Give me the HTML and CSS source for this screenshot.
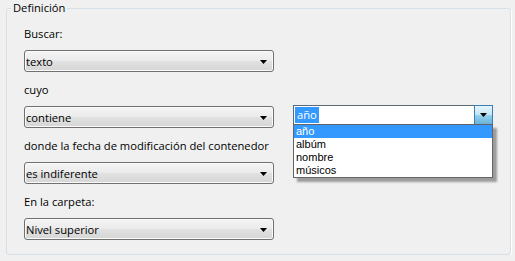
FILE: index.html
```html
<!DOCTYPE html>
<html lang="es">
<head>
    <meta charset="UTF-8">
    <title>Definición</title>
    <link rel="stylesheet" href="styles.css">
</head>
<body>
    <fieldset class="group">
        <legend>Definición</legend>

        <div class="field">
            <label>Buscar:</label>
            <div class="select">
                <span>texto</span>
                <svg class="arrow" width="7" height="4" viewBox="0 0 7 4"><path d="M0 0h7L3.5 4z"/></svg>
            </div>
        </div>

        <div class="field">
            <label>cuyo</label>
            <div class="row">
                <div class="select">
                    <span>contiene</span>
                    <svg class="arrow" width="7" height="4" viewBox="0 0 7 4"><path d="M0 0h7L3.5 4z"/></svg>
                </div>
                <div class="combo">
                    <div class="edit"><span class="sel">año</span></div>
                    <div class="drop">
                        <svg width="7" height="4" viewBox="0 0 7 4"><path d="M0 0h7L3.5 4z"/></svg>
                    </div>
                    <ul class="list">
                        <li class="active">año</li>
                        <li>albúm</li>
                        <li>nombre</li>
                        <li>músicos</li>
                    </ul>
                </div>
            </div>
        </div>

        <div class="field">
            <label>donde la fecha de modificación del contenedor</label>
            <div class="select">
                <span>es indiferente</span>
                <svg class="arrow" width="7" height="4" viewBox="0 0 7 4"><path d="M0 0h7L3.5 4z"/></svg>
            </div>
        </div>

        <div class="field">
            <label>En la carpeta:</label>
            <div class="select">
                <span>Nivel superior</span>
                <svg class="arrow" width="7" height="4" viewBox="0 0 7 4"><path d="M0 0h7L3.5 4z"/></svg>
            </div>
        </div>
    </fieldset>
</body>
</html>
```

FILE: styles.css
```css
body {
    margin: 0;
    background-color: #f0f0f0;
    font-family: "Open Sans", "Noto Sans", sans-serif;
    font-size: 11.2px;
    color: #000000;
}
.group {
    box-sizing: border-box;
    width: 503px;
    height: 255px;
    margin: 0 0 0 6px;
    padding: 10px 17px 0 17px;
    border: 1px solid #d5dfe5;
    border-radius: 3px;
    box-shadow: 1px 1px 0 #ffffff;
}
.group legend {
    margin-left: -13px;
    padding: 0 2px;
    line-height: 16px;
}
.field {
    display: flex;
    flex-direction: column;
    gap: 8px;
    margin-bottom: 10px;
}
.field label {
    display: block;
    line-height: 16px;
}
.row {
    display: flex;
    align-items: flex-start;
}
.select {
    box-sizing: border-box;
    width: 250px;
    height: 22px;
    display: flex;
    align-items: center;
    justify-content: space-between;
    padding: 0 6px 0 1px;
    border: 1px solid #707070;
    border-radius: 3px;
    background: linear-gradient(#f4f4f4 0%, #ececec 45%, #e0e0e0 55%, #d6d6d6 100%);
    box-shadow: inset 0 0 0 1px #fafafa;
}
.arrow {
    margin-top: 1px;
}
.combo {
    position: relative;
    display: flex;
    width: 200px;
    height: 20px;
    margin-left: 19px;
    margin-top: -1px;
    font-family: "Liberation Sans", Arial, sans-serif;
    font-size: 11px;
}
.edit {
    box-sizing: border-box;
    flex: 1;
    padding: 1px;
    border: 1px solid #5b6a78;
    border-right: none;
    background-color: #ffffff;
}
.edit .sel {
    display: inline-block;
    padding: 0 2px;
    line-height: 16px;
    background-color: #3399ff;
    color: #ffffff;
    font-family: "Open Sans", sans-serif;
    font-size: 11.2px;
}
.drop {
    box-sizing: border-box;
    width: 19px;
    display: flex;
    align-items: center;
    justify-content: center;
    border: 1px solid #3c7fb1;
    background: linear-gradient(#e5f4fc 0%, #c4e5f6 50%, #98d1ef 50%, #68b3db 100%);
}
.list {
    position: absolute;
    top: 19px;
    left: 0;
    box-sizing: border-box;
    width: 200px;
    margin: 0;
    padding: 0;
    list-style: none;
    border: 1px solid #646464;
    background-color: #ffffff;
    box-shadow: 4px 4px 2px rgba(0, 0, 0, 0.35);
}
.list li {
    height: 13px;
    line-height: 13px;
    padding-left: 2px;
    color: #000000;
}
.list li.active {
    background-color: #3399ff;
    color: #ffffff;
}
```
